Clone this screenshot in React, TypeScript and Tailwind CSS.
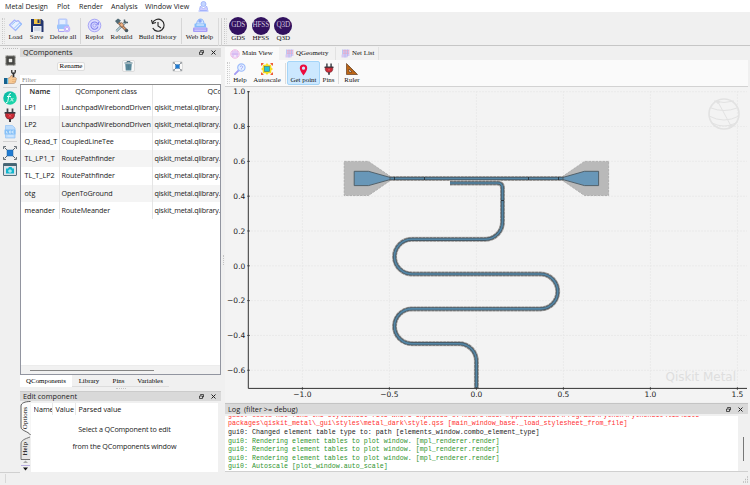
import type { ReactNode } from "react";

const SERIF = "font-['Liberation_Serif',serif]";

function Svg({ w, h, box, children, className = "" }: { w: number; h: number; box: string; children: ReactNode; className?: string }) {
  return (
    <svg width={w} height={h} viewBox={box} fill="none" className={`block shrink-0 ${className}`}>
      {children}
    </svg>
  );
}

/* ---------- toolbar icons ---------- */

const LoadIcon = () => (
  <Svg w={15} h={15} box="0 0 30 30">
    <path d="M3 14 L13 4 L17 7 L20 5 L27 12 L15 25 Z" fill="#e9f0ff" stroke="#a9b4fb" strokeWidth="2.4" strokeLinejoin="round" />
    <path d="M7 14 L15 7 M15 25 L27 12 L23 10 L12 21" stroke="#8fc4fb" strokeWidth="2" />
  </Svg>
);
const SaveIcon = () => (
  <Svg w={14} h={15} box="0 0 28 30">
    <path d="M2 2 H23 L27 6 V28 H2 Z" fill="#22356f" />
    <rect x="8" y="2" width="13" height="10" fill="#f4c542" />
    <rect x="15" y="3" width="4" height="7" fill="#22356f" />
    <rect x="6" y="16" width="17" height="12" fill="#eceff5" />
    <path d="M8 20 H21 M8 24 H21" stroke="#aab2c8" strokeWidth="1.5" />
  </Svg>
);
const DeleteAllIcon = () => (
  <Svg w={15} h={15} box="0 0 30 30">
    <rect x="5" y="2" width="17" height="13" rx="2" fill="#c9dcff" stroke="#a9bafa" strokeWidth="1.5" />
    <path d="M8 6 H18 M8 10 H18" stroke="#fff" strokeWidth="2" />
    <rect x="2" y="13" width="24" height="9" rx="2" fill="#9cc4fc" />
    <path d="M5 22 V27 H17" stroke="#a9a4f8" strokeWidth="2" />
    <circle cx="22" cy="22" r="6.5" fill="#c6b6fb" />
    <path d="M19.5 19.5 L24.5 24.5 M24.5 19.5 L19.5 24.5" stroke="#fff" strokeWidth="1.8" />
  </Svg>
);
const ReplotIcon = () => (
  <Svg w={15} h={15} box="0 0 30 30">
    <circle cx="15" cy="15" r="12.6" fill="#dcdcff" stroke="#a7a5f6" strokeWidth="2" />
    <path d="M21.5 12 A7.2 7.2 0 1 0 22 17" stroke="#8586ee" strokeWidth="2.2" />
    <path d="M23 8 V13.5 H17.5" stroke="#8586ee" strokeWidth="1.8" />
    <circle cx="15" cy="15" r="3.3" stroke="#9a9cf4" strokeWidth="1.8" />
  </Svg>
);
const RebuildIcon = () => (
  <Svg w={15} h={15} box="0 0 30 30">
    <path d="M5 26 L24 7" stroke="#52676f" strokeWidth="4.6" />
    <path d="M4 27 L23 8" stroke="#b5d2dc" strokeWidth="2.8" />
    <path d="M21 10 L21 3 M21 9 L28 9" stroke="#52656d" strokeWidth="3" />
    <path d="M8 8 L25 25" stroke="#6a4d3e" strokeWidth="5" />
    <path d="M8 8 L25 25" stroke="#dda273" strokeWidth="2.8" />
    <path d="M2 6 L8 1 L14 5 L7 12 Z" fill="#526b76" />
    <path d="M11 12 L16 9 L20 15 L14 18 Z" fill="#efb282" stroke="#68483a" />
    <circle cx="25" cy="25" r="3.5" fill="#485860" />
  </Svg>
);
const HistoryIcon = () => (
  <Svg w={15} h={15} box="0 0 30 30">
    <path d="M5 10 A12 12 0 1 1 5.5 20" stroke="#292929" strokeWidth="2.3" />
    <path d="M3 4 L5 11 L12 9" stroke="#292929" strokeWidth="2.3" />
    <path d="M16 8 V16 L22 20" stroke="#292929" strokeWidth="2.2" />
  </Svg>
);
const WebHelpIcon = () => (
  <Svg w={16} h={15} box="0 0 32 30">
    <path d="M9 13 Q10 2 17 2 Q24 2 24 13" fill="#d1e4ff" stroke="#8eb6fa" strokeWidth="2" />
    <circle cx="16" cy="6" r="3.5" fill="#87a9f8" />
    <rect x="5" y="11" width="23" height="8" rx="1" fill="#84bcfb" />
    <path d="M9 14 H24" stroke="#edf5ff" strokeWidth="2" />
    <rect x="2" y="19" width="29" height="9" rx="2" fill="#a59cf7" />
    <path d="M5 22 H28 M5 25 H28" stroke="#d7d4ff" strokeWidth="1.4" />
  </Svg>
);
const UserIcon = () => (
  <Svg w={11} h={11} box="0 0 22 22">
    <circle cx="11" cy="6" r="5" fill="#c3d5ff" stroke="#9db0fa" strokeWidth="1.7" />
    <path d="M5 10 Q1 20 6 19 H17 Q21 19 17 10 L11 16 Z" fill="#cfceff" stroke="#9cacfb" strokeWidth="1.6" />
    <path d="M1 20 H21" stroke="#9aabfb" strokeWidth="2" />
  </Svg>
);

/* ---------- side bar icons ---------- */

const ChipIcon = () => (
  <Svg w={11} h={11} box="0 0 22 22">
    <rect x="1" y="1" width="20" height="20" fill="#8b8b86" />
    <rect x="3" y="3" width="16" height="16" fill="#3b3b38" />
    <rect x="7.5" y="7.5" width="7" height="7" fill="#ecece8" />
    <path d="M1 5 H21 M1 17 H21 M5 1 V21 M17 1 V21" stroke="#555550" />
  </Svg>
);
const HandIcon = () => (
  <Svg w={13} h={14} box="0 0 26 28">
    <path d="M19 5 V14" stroke="#303030" strokeWidth="3.4" />
    <path d="M15.5 0 V4 Q15.5 7 19 7 Q22.5 7 22.5 4 V0" stroke="#303030" strokeWidth="2.6" />
    <path d="M7 17 L12 15 L14 11 Q18 10 17 15 H23 Q25.5 15.5 24.5 19 L22.5 25 Q22 27 18 27 H7 Z" fill="#f8c993" stroke="#9a6b48" strokeWidth="0.9" />
    <path d="M16 19 H24 M16 23 H23" stroke="#dda066" />
    <rect x="0" y="16" width="7" height="12" fill="#17618e" />
    <rect x="6" y="17" width="2.5" height="10" fill="#62bee9" />
  </Svg>
);
const FxIcon = () => (
  <Svg w={14} h={14} box="0 0 28 28">
    <defs>
      <linearGradient id="fx" x1="0" x2="1" y1="0" y2="1">
        <stop stopColor="#07b3a5" />
        <stop offset="1" stopColor="#20dfaa" />
      </linearGradient>
    </defs>
    <circle cx="14" cy="14" r="13.5" fill="url(#fx)" />
    <path d="M16 5 Q12 4 11.5 10 L9.5 21 Q9 24 6 23 M8 11 H16" stroke="#eafffa" strokeWidth="2" />
    <path d="M15 14 Q18 14 18 18 Q18 21 21 20 M21 14 L14 21" stroke="#eafffa" strokeWidth="1.6" />
  </Svg>
);
const PlugIcon = ({ w = 12, h = 14 }) => (
  <Svg w={w} h={h} box="0 0 24 28">
    <path d="M7 1 V9 M17 1 V9" stroke="#3f4148" strokeWidth="3.5" />
    <rect x="1" y="8" width="22" height="3.5" rx="1" fill="#35373f" />
    <path d="M3 11 H21 V16 Q20 22 12 23 Q4 22 3 16 Z" fill="#c92934" stroke="#5c252d" strokeWidth="1.2" />
    <path d="M9 13 L15 18 M15 13 L9 18" stroke="#ed6870" strokeWidth="1.5" />
    <path d="M12 22 V28" stroke="#393b42" strokeWidth="4" />
  </Svg>
);
const LogFileIcon = () => (
  <Svg w={12} h={14} box="0 0 24 28">
    <path d="M3 1 H17 L22 6 V26 H3 Z" fill="#bcdcfc" stroke="#8cc1f6" strokeWidth="1.3" />
    <rect x="1" y="9" width="22" height="10" rx="1" fill="#86c0f7" />
    <path d="M5 12 V16 H8 M11 12 H14 V16 H11 Z M20 12 H17 V16 H20" stroke="#e5f4ff" strokeWidth="1.3" />
    <path d="M7 22 H19" stroke="#e6f3ff" strokeWidth="1.5" />
  </Svg>
);
const ExpandIcon = ({ s = 14 }) => (
  <Svg w={s} h={s} box="0 0 28 28">
    <path d="M3 3 L25 25 M25 3 L3 25" stroke="#4d555d" strokeWidth="1.8" />
    <path d="M1 6 V1 H6 M22 1 H27 V6 M27 22 V27 H22 M6 27 H1 V22" stroke="#5a636b" strokeWidth="1.8" />
    <rect x="8" y="8" width="12" height="12" fill="#207bd2" stroke="#1b5f9e" />
  </Svg>
);
const CameraIcon = () => (
  <Svg w={14} h={13} box="0 0 28 26">
    <rect x="1" y="1" width="26" height="24" rx="1" fill="#dce3e9" stroke="#56717f" strokeWidth="2" />
    <rect x="1" y="1" width="26" height="5" fill="#456473" />
    <path d="M6 11 H10 L12 8 H17 L19 11 H22 V21 H6 Z" fill="#12b5cd" />
    <circle cx="14" cy="16" r="3.2" fill="#f5ffff" />
    <circle cx="14" cy="16" r="1.4" fill="#12b5cd" />
  </Svg>
);
const TrashIcon = () => (
  <Svg w={9} h={10} box="0 0 18 20">
    <path d="M1 4 H17 M6 3 V1 H12 V3" stroke="#4b7484" strokeWidth="2" />
    <path d="M2.5 6 H15.5 L14.5 19 H3.5 Z" fill="#5d8c9e" />
    <path d="M6 8 V17 M9 8 V17 M12 8 V17" stroke="#477384" />
  </Svg>
);

/* ---------- plot tool bar icons ---------- */

const HelpIcon = () => (
  <Svg w={12} h={12} box="0 0 26 26">
    <path d="M2 24 L10 16" stroke="#a39bf4" strokeWidth="4" strokeLinecap="round" />
    <circle cx="16" cy="10" r="8" fill="#e3efff" stroke="#9fbdfb" strokeWidth="2.4" />
    <path d="M13 8 Q16 4 19 8 Q19 10 16 12 V14" stroke="#9fa5f7" strokeWidth="2" />
  </Svg>
);
const AutoscaleIcon = () => (
  <Svg w={12} h={12} box="0 0 24 24">
    <path d="M3 3 L21 21 M21 3 L3 21" stroke="#ee5b3f" strokeWidth="2" />
    <path d="M0 6 V0 H6 Z M18 0 H24 V6 Z M24 18 V24 H18 Z M6 24 H0 V18 Z" fill="#ef5b36" />
    <path d="M12 0 L15 3.5 H20.5 V9 L24 12 L20.5 15 V20.5 H15 L12 24 L9 20.5 H3.5 V15 L0 12 L3.5 9 V3.5 H9 Z" fill="#f5df22" />
    <rect x="7" y="7" width="10" height="10" fill="#23c4d6" stroke="#42767b" strokeWidth="1.2" />
  </Svg>
);
const PinIcon = () => (
  <Svg w={9} h={12} box="0 0 18 26" className="mt-[1px]">
    <path fillRule="evenodd" d="M9 1 A8 8 0 0 0 1 9 Q1 14 9 25 Q17 14 17 9 A8 8 0 0 0 9 1 Z M9 5.5 A3.5 3.5 0 1 1 9 12.5 A3.5 3.5 0 1 1 9 5.5 Z" fill="#ec0b3f" />
  </Svg>
);
const RulerIcon = () => (
  <Svg w={12} h={12} box="0 0 24 24">
    <path fillRule="evenodd" d="M1 1 L23 23 H1 Z M6 12 V18 H12 Z" fill="#bd6717" stroke="#5b3418" strokeWidth="1.3" />
    <path d="M5 6 L8 9 M10 11 L13 14 M15 16 L18 19" stroke="#5b3418" />
  </Svg>
);
const GeometryIcon = () => (
  <Svg w={9} h={9} box="0 0 18 18">
    <path d="M3 1 H17 V14 H13 V17 H1 V11 H3 Z" fill="#d8c7f1" />
    <path d="M4 3 H16 M4 6 H16 M4 9 H16" stroke="#efaec6" strokeWidth="1.8" />
    <path d="M3 1 V11 M8 1 V17 M13 1 V15" stroke="#a4bdf4" strokeWidth="1.3" />
  </Svg>
);
const MainViewIcon = () => (
  <Svg w={10} h={10} box="0 0 20 20">
    <circle cx="10" cy="10" r="8.5" fill="#f3e4fb" stroke="#eeb0dc" strokeWidth="1.7" />
    <path d="M6 4 V16 M10 3 V12 M14 4 V16 M3 10 H17" stroke="#c8a3ee" strokeWidth="1.5" />
  </Svg>
);

/* ---------- shared pieces ---------- */

function Grip({ className = "" }: { className?: string }) {
  return (
    <div className={`flex shrink-0 gap-px ${className}`}>
      <div className="border-l border-dotted border-[#c9c9c9]" />
      <div className="border-l border-dotted border-[#d8d8d8]" />
    </div>
  );
}

function Tool({ icon, label, className }: { icon: ReactNode; label: string; className: string }) {
  return (
    <div className={`flex shrink-0 flex-col items-center ${SERIF} ${className}`}>
      <div className="flex h-[15px] items-center justify-center">{icon}</div>
      <div className="text-[6.9px] leading-[8px] whitespace-nowrap text-[#111]">{label}</div>
    </div>
  );
}

function Disc({ name }: { name: string }) {
  return (
    <div className="flex h-[18px] w-[18px] items-center justify-center rounded-full bg-[#32125f] text-[7.2px] leading-none tracking-[-0.2px] text-[#cfc3df]">
      {name}
    </div>
  );
}

function DockTitle({ title, className = "" }: { title: string; className?: string }) {
  return (
    <div className={`flex shrink-0 items-center justify-between bg-[#d9d9d9] pr-[5px] pl-[3px] text-[#222] ${className}`}>
      <span className="text-[7.3px] leading-[9px] whitespace-pre">{title}</span>
      <div className="flex items-center gap-[7px]">
        <Svg w={5} h={5} box="0 0 10 10">
          <path d="M3 3 V1 H9 V6 H7 M1 4 H7 V9 H1 Z" stroke="#222" strokeWidth="1.5" />
        </Svg>
        <Svg w={5} h={5} box="0 0 10 10">
          <path d="M1 1 L9 9 M9 1 L1 9" stroke="#222" strokeWidth="2" />
        </Svg>
      </div>
    </div>
  );
}

const rows = [
  ["LP1", "LaunchpadWirebondDriven"],
  ["LP2", "LaunchpadWirebondDriven"],
  ["Q_Read_T", "CoupledLineTee"],
  ["TL_LP1_T", "RoutePathfinder"],
  ["TL_T_LP2", "RoutePathfinder"],
  ["otg", "OpenToGround"],
  ["meander", "RouteMeander"],
];

/* ---------- panels ---------- */

function MenuBar() {
  return (
    <div className="flex h-[12px] shrink-0 items-center bg-white pl-[5px] text-[7.1px] leading-[12px] whitespace-nowrap text-[#222]">
      <span className="w-[52px]">Metal Design</span>
      <span className="w-[22px]">Plot</span>
      <span className="w-[32px]">Render</span>
      <span className="w-[34px]">Analysis</span>
      <span className="w-[52.5px]">Window View</span>
      <UserIcon />
    </div>
  );
}

function ToolBar() {
  return (
    <div className="flex h-[34px] shrink-0 border-b border-[#c6c6c6] bg-[#f0f0f0] pt-[5.5px]">
      <Grip className="mr-[1px] ml-[2px] h-[26px]" />
      <Tool className="w-[19px]" icon={<LoadIcon />} label="Load" />
      <Tool className="w-[23px]" icon={<SaveIcon />} label="Save" />
      <Tool className="w-[30px]" icon={<DeleteAllIcon />} label="Delete all" />
      <div className="ml-[1.5px] h-[26px] w-px bg-[#d6d6d6]" />
      <Tool className="w-[28px]" icon={<ReplotIcon />} label="Replot" />
      <Tool className="w-[26px]" icon={<RebuildIcon />} label="Rebuild" />
      <Tool className="w-[46px]" icon={<HistoryIcon />} label="Build History" />
      <div className="h-[26px] w-px bg-[#d6d6d6]" />
      <Tool className="w-[36px]" icon={<WebHelpIcon />} label="Web Help" />
      <div className="mr-[2px] h-[28px] w-px bg-[#dadada]" />
      <div className="mr-[2px] h-[28px] w-px bg-[#d2d2d2]" />
      <Grip className="h-[26px]" />
      <div className={`flex pl-[0.5px] ${SERIF}`}>
        {["GDS", "HFSS", "Q3D"].map((name) => (
          <div key={name} className="flex w-[22.5px] flex-col items-center">
            <div className="mt-[-1px]">
              <Disc name={name} />
            </div>
            <div className="mt-[0.5px] text-[7px] leading-[7px] text-[#111]">{name}</div>
          </div>
        ))}
      </div>
    </div>
  );
}

function SideBar() {
  return (
    <div className="flex w-[20px] shrink-0 flex-col items-center border-b border-[#d0d0d0] pt-[2px]">
      <div className="mb-[6px] w-[15px] border-t border-dotted border-[#bdbdbd]" />
      <ChipIcon />
      <div className="mt-[4px]"><HandIcon /></div>
      <div className="mt-[3px] mb-[2.5px] h-px w-[14px] bg-[#d2d2d2]" />
      <FxIcon />
      <div className="mt-[3px]"><PlugIcon /></div>
      <div className="mt-[3px]"><LogFileIcon /></div>
      <div className="mt-[2.5px] mb-[3.5px] h-px w-[14px] bg-[#d2d2d2]" />
      <ExpandIcon />
      <div className="mt-[3.5px]"><CameraIcon /></div>
    </div>
  );
}

function ComponentsDock() {
  const grid = "grid grid-cols-[39px_93px_1fr]";
  return (
    <>
      <DockTitle title="QComponents" className="h-[9px]" />
      <div className="flex h-[18px] shrink-0 items-center">
        <div className="flex w-[102px] justify-center">
          <div className={`h-[9px] w-[28px] rounded-[2px] border border-[#ddd] bg-[#fcfcfc] text-center text-[7px] leading-[7.5px] ${SERIF}`}>Rename</div>
        </div>
        <div className="flex w-[13px] justify-center rounded-[2px] border border-[#dcdcdc] bg-[#f9f9f9]">
          <TrashIcon />
        </div>
        <div className="ml-[37px] rounded-[2px] border border-[#dcdcdc] bg-[#f9f9f9]"><ExpandIcon s={9} /></div>
      </div>
      <div className={`h-[9px] shrink-0 bg-white pl-[2px] text-[6.5px] leading-[9px] text-[#858585] ${SERIF}`}>Filter</div>
      <div className="flex h-[291px] shrink-0 flex-col overflow-hidden border border-[#9295a0] border-t-[#8c8c8c] bg-white text-[7.2px] whitespace-nowrap text-[#222]">
        <div className={`${grid} h-[13.6px] shrink-0 leading-[13.4px]`}>
          <div className="border-r border-[#e5e5e5] text-center font-semibold">Name</div>
          <div className="border-r border-[#e5e5e5] text-center tracking-[-0.1px]">QComponent class</div>
          <div className="overflow-hidden pl-[54.5px]">QComponent module</div>
        </div>
        {rows.map(([name, cls], i) => (
          <div key={name} className={`${grid} h-[17.2px] shrink-0 leading-[17.2px] ${i % 2 ? "bg-[#f4f4f4]" : "bg-white"}`}>
            <div className="border-r border-[#e5e5e5] pl-[3.5px] font-medium text-[#111]">{name}</div>
            <div className="border-r border-[#e5e5e5] pl-[1.5px] tracking-[-0.12px]">{cls}</div>
            <div className="pl-[1.5px] tracking-[-0.17px]">qiskit_metal.qlibrary.</div>
          </div>
        ))}
        <div className="mt-auto h-[9px] border-t border-[#ececec] bg-[#f1f1f1] pt-[4px] pl-[9px]">
          <div className="h-px w-[124px] bg-[#858585]" />
        </div>
      </div>
      <div className={`flex h-[12px] shrink-0 text-center text-[6.9px] leading-[11px] ${SERIF}`}>
        <div className="w-[52px] bg-white">QComponents</div>
        <div className="w-[34px] border-b border-[#ddd]">Library</div>
        <div className="w-[25px] border-b border-[#ddd]">Pins</div>
        <div className="w-[38px] border-b border-[#ddd]">Variables</div>
      </div>
      <div className="mx-auto mt-[1px] w-[10px] border-t border-dotted border-[#c4c4c4]" />
    </>
  );
}

function EditDock() {
  return (
    <>
      <DockTitle title="Edit component" className="mt-[2px] h-[10px] border-t border-[#cbcbcb]" />
      <div className="flex h-[72px] shrink-0">
        <div className={`flex w-[11px] shrink-0 flex-col items-center overflow-hidden text-[7px] ${SERIF}`}>
          <div className="relative flex h-[35px] w-[11px] shrink-0 items-center justify-center">
            <svg className="absolute inset-0" width="11" height="35" fill="none">
              <path d="M10.5 0.5 C5 0.5 1 2 1 5 V26 C1 30 8 30 10.5 34" stroke="#333" strokeWidth="0.8" fill="#fbfbfb" />
            </svg>
            <span className="relative rotate-180 leading-[9px] [writing-mode:vertical-rl]">Options</span>
          </div>
          <div className="relative flex h-[24px] w-[11px] shrink-0 items-center justify-center pt-[2px]">
            <svg className="absolute inset-0" width="11" height="24" fill="none">
              <path d="M10 1 C5 3 1 4 1 8 V23.5 H10" stroke="#555" strokeWidth="0.8" fill="#e6e6e6" />
            </svg>
            <span className="relative rotate-180 leading-[9px] [writing-mode:vertical-rl]">Help</span>
          </div>
          <Svg w={9} h={12} box="0 0 9 12">
            <path d="M2 3 L4.5 0.5 L7 3 Z" fill="#aaa" />
            <path d="M0 5.5 H9" stroke="#b9aee0" />
            <path d="M2 7.5 H7 L4.5 10.5 Z" fill="#111" />
          </Svg>
        </div>
        <div className="mt-[2px] h-[69px] w-[187px] bg-white text-[7.2px] whitespace-nowrap text-[#222]">
          <div className="flex h-[12px] pl-[2.5px] leading-[12px] font-medium text-[#111]">
            <div className="w-[19px] overflow-hidden border-r border-[#e8e8e8]">Name</div>
            <div className="w-[23px] border-r border-[#e8e8e8] pl-[3px]">Value</div>
            <div className="pl-[3px]">Parsed value</div>
          </div>
          <div className="pt-[6px] text-center leading-[17px] tracking-[-0.14px]">
            Select a QComponent to edit
            <br />
            from the QComponents window
          </div>
        </div>
      </div>
    </>
  );
}

const X = [302.4, 389.4, 476.4, 563.4, 650.4, 737.4];
const XL = ["−1.0", "−0.5", "0.0", "0.5", "1.0", "1.5"];
const YL = ["1.0", "0.8", "0.6", "0.4", "0.2", "0.0", "−0.2", "−0.4", "−0.6"];
const MEANDER =
  "M450 183 H497.5 Q502.5 183 502.5 188 V221.9 A17.4 17.4 0 0 1 485.1 239.3 H411.9 A17.35 17.35 0 0 0 411.9 274 H540.3 A17.4 17.4 0 0 1 540.3 308.9 H411.9 A17.4 17.4 0 0 0 411.9 343.7 H459 A17.4 17.4 0 0 1 476.4 361.1 V388";

function Trace({ d }: { d: string }) {
  return (
    <>
      <path d={d} stroke="#bcbcbc" strokeWidth="5" />
      <path d={d} stroke="#8f8a86" strokeWidth="4.5" strokeDasharray="2.6 1" />
      <path d={d} stroke="#485a66" strokeWidth="3.2" />
      <path d={d} stroke="#5386a6" strokeWidth="1.6" />
    </>
  );
}

function Plot() {
  return (
    <svg width="525" height="315" viewBox="225 87 525 315" fill="none" className="block shrink-0 overflow-visible bg-[#f3f3f3]" fontFamily="'DejaVu Sans', sans-serif">
      <g stroke="#e7e7e7" strokeWidth="0.8" strokeDasharray="2 1">
        {X.map((x) => (
          <path key={x} d={`M${x} 91 V388`} />
        ))}
        {YL.map((t, i) => (
          <path key={t} d={`M248 ${91.7 + i * 34.82} H747`} />
        ))}
      </g>
      <g stroke="#e2e2e2" strokeWidth="1">
        <circle cx="724" cy="114" r="15" strokeWidth="1.6" />
        <path d="M714 101 Q724 104 734 101 M711 108 Q724 113 737 108 M709 116 Q724 124 739 116 M712 123 Q724 129 736 123 M718 102 L731 126" />
        <circle cx="718" cy="102" r="1.3" fill="#e2e2e2" />
        <circle cx="731" cy="126" r="1.3" fill="#e2e2e2" />
      </g>
      <text x="665.5" y="381" fontSize="12" textLength="70.5" fill="#dedede">Qiskit Metal</text>

      <g fill="#b9b9b9" stroke="#a6a6a6" strokeWidth="0.8" strokeDasharray="2.5 1">
        <path d="M344.2 161.4 H368.5 L390.5 176.5 V180.4 L368.5 195.5 H344.2 Z" />
        <path d="M608.6 161.4 H584.5 L562.5 176.5 V180.4 L584.5 195.5 H608.6 Z" />
      </g>
      <Trace d="M389 178.5 H564" />
      <Trace d={MEANDER} />
      <g fill="#6897b8" stroke="#4b5962" strokeWidth="0.9">
        <path d="M354.2 171.3 H368.5 L390 177.4 V179.6 L368.5 185.6 H354.2 Z" />
        <path d="M598.6 171.3 H584.5 L563 177.4 V179.6 L584.5 185.6 H598.6 Z" />
      </g>
      <path d="M394.5 177 V180 M424.5 177 V180 M528.5 177 V180 M558.5 177 V180 M501 200.5 H504" stroke="#27323a" strokeWidth="0.9" />

      <path d="M248.3 91 V388.4 H747" stroke="#333" strokeWidth="1" />
      <g fontSize="7.5" fill="#222">
        {X.map((x, i) => (
          <g key={x}>
            <path d={`M${x} 387 V390`} stroke="#333" strokeWidth="0.7" />
            <text x={x} y="396.5" textAnchor="middle">{XL[i]}</text>
          </g>
        ))}
        {YL.map((t, i) => (
          <g key={t}>
            <path d={`M247 ${91.7 + i * 34.82} H250`} stroke="#333" strokeWidth="0.7" />
            <text x="245.3" y={94.4 + i * 34.82} textAnchor="end">{t}</text>
          </g>
        ))}
      </g>
    </svg>
  );
}

function ViewTabs() {
  const tab = "flex h-[13px] items-center gap-[2px]";
  return (
    <div className={`flex h-[14px] shrink-0 items-end text-[6.9px] text-[#111] ${SERIF}`}>
      <div className={`${tab} w-[54px] bg-[#fafafa] pl-[5px]`}><MainViewIcon />Main View</div>
      <div className={`${tab} w-[57px] border-r border-[#e2e2e2] bg-[#f2f2f2] pl-[6px]`}><GeometryIcon />QGeometry</div>
      <div className={`${tab} w-[43px] border-r border-[#e2e2e2] bg-[#f2f2f2] pl-[5px]`}><GeometryIcon />Net List</div>
    </div>
  );
}

function PlotTools() {
  return (
    <div className="mr-[2px] flex h-[27px] shrink-0 border-b-[1.5px] border-[#d2d2d2] bg-[#fafafa] pt-[1px]">
      <Grip className="mt-[1px] mr-[1px] ml-[2px] h-[22px]" />
      <Tool className="w-[18px]" icon={<HelpIcon />} label="Help" />
      <Tool className="w-[36px]" icon={<AutoscaleIcon />} label="Autoscale" />
      <div className="mt-[2px] mr-px h-[21px] w-px bg-[#ddd]" />
      <Tool className="h-[24px] w-[33px] rounded-[2px] border border-[#a5d5f8] bg-[#cce8ff]" icon={<PinIcon />} label="Get point" />
      <Tool className="w-[17px]" icon={<PlugIcon w={10} h={12} />} label="Pins" />
      <div className="mt-[2px] ml-[1px] h-[21px] w-px bg-[#ddd]" />
      <Tool className="w-[26px]" icon={<RulerIcon />} label="Ruler" />
    </div>
  );
}

function LogPanel() {
  return (
    <div className="mt-[1px] mr-[2px] flex h-[70px] shrink-0 flex-col">
      <DockTitle title="Log  (filter >= debug)" className="h-[11px] border-t border-[#c4c4c4]" />
      <div className="mt-[2px] flex h-[56px] border-b border-[#d0d0d0] bg-white">
        <div className="flex flex-1 flex-col justify-end overflow-hidden pl-[3px] font-['Liberation_Mono',monospace] text-[6.67px] leading-[8.6px] whitespace-pre text-[#2f942f]">
          <div className="text-[#ff3030]">{"gui0: Could not find the stylesheet file where expected C:\\Users\\user\\AppData\\Local\\Programs\\Python\\Python310\\lib\\site-"}</div>
          <div className="text-[#ff3030]">{"packages\\qiskit_metal\\_gui\\styles\\metal_dark\\style.qss [main_window_base._load_stylesheet_from_file]"}</div>
          <div className="text-[#222]">gui0: Changed element table type to: path [elements_window.combo_element_type]</div>
          <div>gui0: Rendering element tables to plot window. [mpl_renderer.render]</div>
          <div>gui0: Rendering element tables to plot window. [mpl_renderer.render]</div>
          <div>gui0: Rendering element tables to plot window. [mpl_renderer.render]</div>
          <div>gui0: Autoscale [plot_window.auto_scale]</div>
        </div>
        <div className="flex w-[10px] justify-center bg-[#f0f0f0] pt-[21px]">
          <div className="h-[24px] w-px bg-[#777]" />
        </div>
      </div>
    </div>
  );
}

export default function App() {
  return (
    <div className="flex h-[485px] w-[750px] flex-col overflow-hidden bg-[#f0f0f0] font-['Open_Sans',sans-serif]">
      <MenuBar />
      <ToolBar />
      <div className="flex h-[427px] shrink-0">
        <SideBar />
        <div className="flex w-[201px] shrink-0 flex-col pt-[2px]">
          <ComponentsDock />
          <EditDock />
        </div>
        <div className="flex w-[4px] shrink-0 items-center justify-center">
          <div className="h-[10px] border-l border-dotted border-[#c4c4c4]" />
        </div>
        <div className="flex w-[525px] shrink-0 flex-col">
          <ViewTabs />
          <PlotTools />
          <Plot />
          <LogPanel />
        </div>
      </div>
      <div className="flex h-[12px] shrink-0 justify-between pl-[5px]">
        <div className="mt-[1px] h-[9px] w-px bg-[#d8d8d8]" />
        <Svg w={8} h={12} box="0 0 8 12">
          <path d="M5 4 h1 M3 6.5 h1 M5 6.5 h1 M1 9 h1 M3 9 h1 M5 9 h1" stroke="#bbb" strokeWidth="1.3" />
        </Svg>
      </div>
    </div>
  );
}
